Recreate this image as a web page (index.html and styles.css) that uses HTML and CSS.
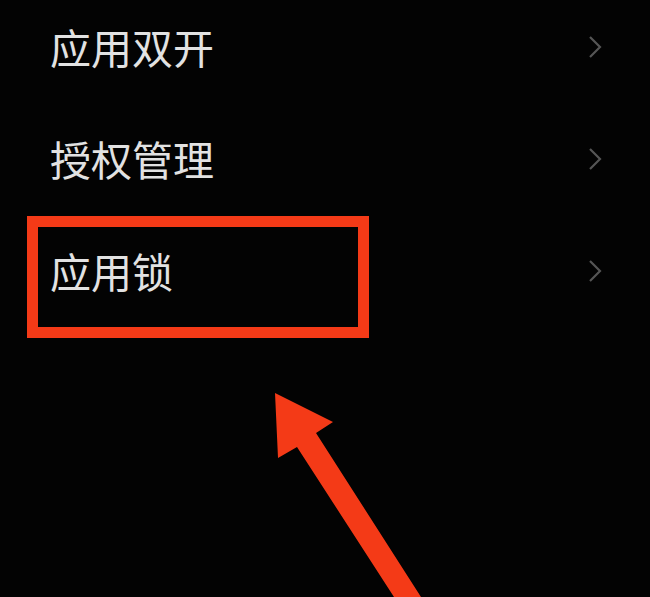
FILE: index.html
```html
<!DOCTYPE html>
<html lang="zh">
<head>
<meta charset="utf-8">
<link rel="stylesheet" href="styles.css">
</head>
<body>
<div class="screen">
  <ul class="list">
    <li class="row"><span class="label">应用双开</span><svg class="chev" viewBox="0 0 14 24"><polyline points="2,2 12,12 2,22"/></svg></li>
    <li class="row"><span class="label">授权管理</span><svg class="chev" viewBox="0 0 14 24"><polyline points="2,2 12,12 2,22"/></svg></li>
    <li class="row"><span class="label">应用锁</span><svg class="chev" viewBox="0 0 14 24"><polyline points="2,2 12,12 2,22"/></svg></li>
  </ul>
  <div class="highlight"></div>
  <svg class="arrow" viewBox="0 0 650 597"><polygon points="275,393 333,422 316,433 421,597 394,597 297,447 278,458"/></svg>
</div>
</body>
</html>
```

FILE: styles.css
```css
html, body {
  margin: 0;
  padding: 0;
  background: #000;
}
.screen {
  position: relative;
  width: 650px;
  height: 597px;
  overflow: hidden;
  background: #030303;
  font-family: "Noto Sans CJK SC", "Noto Sans", sans-serif;
}
.list {
  list-style: none;
  margin: -10px 0 0 0;
  padding: 0;
}
.row {
  height: 112px;
  display: flex;
  align-items: center;
  justify-content: space-between;
  padding: 0 48px 0 50px;
}
.label {
  color: #e2e2e2;
  font-size: 41px;
  line-height: 1;
}
.chev {
  width: 14px;
  height: 24px;
  margin-top: 2px;
  fill: none;
  stroke: #555;
  stroke-width: 2.2;
}
.highlight {
  position: absolute;
  left: 27px;
  top: 216px;
  width: 320px;
  height: 100px;
  border: 11px solid #f43a17;
}
.arrow {
  position: absolute;
  left: 0;
  top: 0;
  width: 650px;
  height: 597px;
  fill: #f43a17;
}
```
